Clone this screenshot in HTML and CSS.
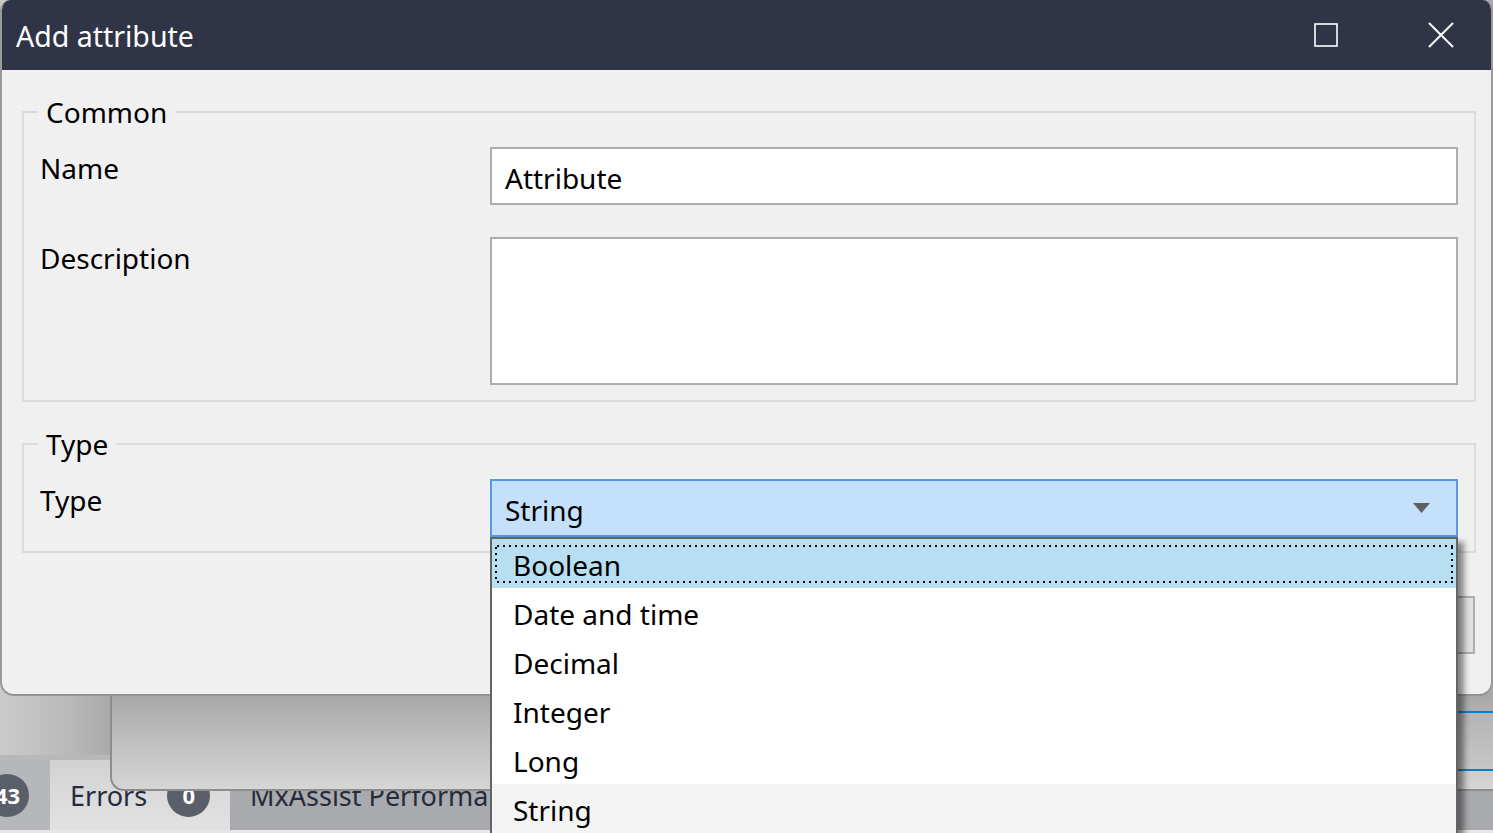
FILE: index.html
```html
<!DOCTYPE html>
<html>
<head>
<meta charset="utf-8">
<title>Add attribute</title>
<link rel="stylesheet" href="styles.css">
</head>
<body>
<div class="desktop">
  <div class="app">
    <div class="app-top"></div>
    <div class="app-sep"></div>
    <div class="tabbar">
      <div class="tab tab-first"><span class="badge badge-cut">43</span></div>
      <div class="tab tab-active"><span class="tab-label">Errors</span><span class="badge">0</span></div>
      <div class="tab tab-dark"><span class="tab-label">MxAssist Performance</span></div>
    </div>
    <div class="app-strip"></div>
  </div>

  <div class="back-dialog">
    <div class="back-field"></div>
  </div>

  <div class="dialog">
    <div class="titlebar">
      <span class="title">Add attribute</span>
      <svg class="ctl ctl-max" width="24" height="24" viewBox="0 0 24 24"><rect x="1" y="1" width="22" height="22" fill="none" stroke="#fff" stroke-width="1.6"/></svg>
      <svg class="ctl ctl-close" width="26" height="26" viewBox="0 0 26 26"><path d="M1 1 L25 25 M25 1 L1 25" stroke="#fff" stroke-width="2" fill="none"/></svg>
    </div>
    <div class="body">
      <fieldset class="group">
        <legend>Common</legend>
        <div class="row row-first">
          <div class="label">Name</div>
          <div class="input">Attribute</div>
        </div>
        <div class="row row-next">
          <div class="label">Description</div>
          <div class="textarea"></div>
        </div>
      </fieldset>
      <fieldset class="group group-type">
        <legend>Type</legend>
        <div class="row row-first">
          <div class="label">Type</div>
          <div class="combo">
            <span class="combo-value">String</span>
            <svg class="combo-arrow" width="17" height="10" viewBox="0 0 17 10"><path d="M0 0 H17 L8.5 10 Z" fill="#5f5f5f"/></svg>
          </div>
        </div>
      </fieldset>
      <div class="buttons">
        <div class="btn">OK</div>
        <div class="btn">Cancel</div>
      </div>
    </div>
  </div>

  <div class="dropdown">
    <div class="item item-selected">Boolean</div>
    <div class="item">Date and time</div>
    <div class="item">Decimal</div>
    <div class="item">Integer</div>
    <div class="item">Long</div>
    <div class="item item-hover">String</div>
  </div>
</div>
</body>
</html>
```

FILE: styles.css
```css
html, body {
  margin: 0;
  padding: 0;
}
body {
  width: 1493px;
  height: 833px;
  overflow: hidden;
  font-family: "Noto Sans", "Open Sans", sans-serif;
  font-size: 28px;
  color: #000;
}
.desktop {
  position: relative;
  width: 1493px;
  height: 833px;
  overflow: hidden;
  background: #d6d6d6;
}

/* background application */
.app {
  position: absolute;
  left: 0;
  top: 0;
  width: 1493px;
  height: 833px;
  display: flex;
  flex-direction: column;
}
.app-top {
  height: 755px;
  background: linear-gradient(to right, #cbcbcb 0px, #b9b9b9 70px, #a9a9a9 110px);
}
.app-sep {
  height: 5px;
  background: #b8b8b8;
}
.tabbar {
  height: 70px;
  display: flex;
  background: #a8a9ac;
}
.tab {
  display: flex;
  align-items: center;
  height: 70px;
  color: #252b3a;
}
.tab-first {
  width: 50px;
  background: #b6b7ba;
}
.tab-active {
  width: 180px;
  padding-left: 20px;
  box-sizing: border-box;
  background: linear-gradient(to bottom, #d2d2d2, #e2e2e2);
}
.tab-dark {
  flex: 1;
  padding-left: 20px;
  background: #a9aaad;
}
.tab-label {
  font-size: 27px;
}
.badge {
  display: inline-flex;
  align-items: center;
  justify-content: center;
  width: 43px;
  height: 43px;
  border-radius: 22px;
  background: #595e69;
  color: #fff;
  font-weight: bold;
  font-size: 22px;
  margin-left: 20px;
}
.badge-cut {
  margin-left: -14px;
}
.app-strip {
  height: 3px;
  background: #e6e6e6;
}

/* dialog behind */
.back-dialog {
  position: absolute;
  left: 110px;
  top: 560px;
  width: 1400px;
  height: 229px;
  border-left: 2px solid #8d8d8d;
  border-bottom: 2px solid #8d8d8d;
  border-bottom-left-radius: 14px;
  background: linear-gradient(to bottom, #a8a8a8 135px, #d6d6d6 229px);
}
.back-field {
  position: absolute;
  left: 1240px;
  top: 151px;
  width: 200px;
  height: 56px;
  border-top: 2px solid #0a7fd0;
  border-bottom: 2px solid #0a7fd0;
  background: linear-gradient(to bottom, #b4b4b4, #c6c6c6);
}

/* main dialog */
.dialog {
  position: absolute;
  left: 0;
  top: 0;
  width: 1493px;
  box-sizing: border-box;
  border-left: 2px solid #9a9a9a;
  border-right: 2px solid #9a9a9a;
  border-bottom: 2px solid #939393;
  border-radius: 10px 10px 14px 14px;
  background: #f0f0f0;
  overflow: hidden;
}
.titlebar {
  height: 70px;
  background: #2f3546;
  display: flex;
  align-items: center;
  padding-left: 14px;
}
.title {
  flex: 1;
  color: #fff;
  font-size: 28.5px;
  line-height: 36px;
  padding-top: 1px;
}
.ctl {
  display: block;
}
.ctl-max {
  margin-right: 90px;
}
.ctl-close {
  margin-right: 37px;
}
.body {
  padding: 24px 15px 40px 20px;
}
.group {
  margin: 0;
  border: 2px solid #dcdcdc;
  padding: 0 16px 15px 16px;
}
.group legend {
  margin-left: -2px;
  padding: 1px 8px 0 8px;
  line-height: 35px;
  font-size: 28px;
}
.group-type {
  margin-top: 24px;
  padding-bottom: 14px;
}
.row {
  display: flex;
  align-items: flex-start;
}
.row-first {
  margin-top: 17px;
}
.row-next {
  margin-top: 32px;
}
.label {
  width: 450px;
  flex: none;
  line-height: 40px;
  padding-top: 1px;
}
.input,
.textarea,
.combo {
  flex: 1;
  box-sizing: border-box;
  border: 2px solid #acacb2;
  background: #fff;
}
.input {
  height: 58px;
  line-height: 54px;
  padding: 2px 0 0 13px;
}
.textarea {
  height: 148px;
}
.combo {
  height: 58px;
  display: flex;
  align-items: center;
  padding-left: 13px;
  background: #c4e0fa;
  border-color: #5599e3;
}
.combo-value {
  flex: 1;
  line-height: 54px;
  padding-top: 3px;
}
.combo-arrow {
  margin-right: 26px;
  display: block;
}
.buttons {
  display: flex;
  justify-content: flex-end;
  gap: 20px;
  margin-top: 43px;
  padding-right: 1px;
}
.btn {
  width: 180px;
  height: 58px;
  box-sizing: border-box;
  border: 2px solid #adadad;
  background: #e1e1e1;
  display: flex;
  align-items: center;
  justify-content: center;
}

/* open drop-down list */
.dropdown {
  position: absolute;
  left: 490px;
  top: 537px;
  width: 968px;
  height: 310px;
  box-sizing: border-box;
  border: 2px solid #646464;
  background: #fff;
  box-shadow: 7px 4px 6px -1px rgba(0, 0, 0, 0.45);
}
.item {
  position: relative;
  height: 49px;
  box-sizing: border-box;
  line-height: 49px;
  padding: 2px 0 0 21px;
}
.item-selected {
  background: #b7dff1;
}
.item-selected::after {
  content: "";
  position: absolute;
  left: 3px;
  right: 3px;
  top: 6px;
  bottom: 5px;
  background:
    linear-gradient(to right, #000 2px, transparent 2px) 2px 0 / 6px 2px repeat-x,
    linear-gradient(to right, #000 2px, transparent 2px) 2px 100% / 6px 2px repeat-x,
    linear-gradient(to bottom, #000 2px, transparent 2px) 0 2px / 2px 6px repeat-y,
    linear-gradient(to bottom, #000 2px, transparent 2px) 100% 2px / 2px 6px repeat-y;
}
.item-hover {
  background: #f4f4f4;
}
```
